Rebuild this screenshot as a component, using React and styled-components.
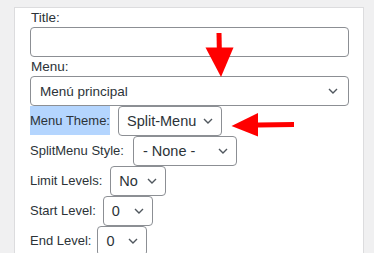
import React from "react";
import styled, { createGlobalStyle } from "styled-components";

const GlobalStyle = createGlobalStyle`
  html, body { margin: 0; padding: 0; background: #f0f0f1; }
  body { font-family: "Liberation Sans", Arial, sans-serif; color: #2c3338; }
`;

const Page = styled.div`
  position: relative;
  width: 374px;
  height: 253px;
  overflow: hidden;
  box-sizing: border-box;
  padding: 7px 10px 0 14px;
`;

const Panel = styled.div`
  background: #fff;
  border: 1px solid #dcdcde;
  border-bottom: none;
  height: 260px;
  box-sizing: border-box;
  padding: 1px 14px 0 15px;
`;

const BlockLabel = styled.div`
  font-size: 13.5px;
  line-height: 18px;
  height: 18px;
  padding-left: 1px;
  color: #2c3338;
`;

const TextInput = styled.div`
  box-sizing: border-box;
  height: 30px;
  border: 1px solid #8c8f94;
  border-radius: 4px;
  background: #fff;
  margin-bottom: 1px;
`;

const SelectBox = styled.div`
  box-sizing: border-box;
  display: flex;
  align-items: center;
  justify-content: space-between;
  width: ${(p) => (p.$w ? `${p.$w}px` : "100%")};
  height: 30px;
  padding: 0 ${(p) => p.$pr || 8}px 0 ${(p) => p.$pl || 8}px;
  border: 1px solid #8c8f94;
  border-radius: 4px;
  background: #fff;
  font-size: ${(p) => p.$fs || 14.5}px;
  color: #2c3338;
  flex-shrink: 0;
`;

const Row = styled.div`
  display: flex;
  align-items: center;
  gap: ${(p) => p.$gap || 7}px;
  height: 30px;
`;

const InlineLabel = styled.span`
  font-size: 13px;
  line-height: 29px;
  height: 29px;
  margin-top: -1px;
  background: ${(p) => (p.$selected ? "#b4d5fe" : "transparent")};
  color: #2c3338;
  white-space: nowrap;
`;

const Overlay = styled.svg`
  position: absolute;
  left: 0;
  top: 0;
  pointer-events: none;
`;

const Chevron = () => (
  <svg width="10" height="6" viewBox="0 0 10 6">
    <path d="M1 1 L5 5 L9 1" fill="none" stroke="#50575e" strokeWidth="1.4" />
  </svg>
);

const rows = [
  { label: "Menu Theme:", value: "Split-Menu", w: 104, selected: true, gap: 8 },
  { label: "SplitMenu Style:", value: "- None -", w: 104, gap: 9, pl: 9 },
  { label: "Limit Levels:", value: "No", w: 56, gap: 8 },
  { label: "Start Level:", value: "0", w: 50, gap: 7 },
  { label: "End Level:", value: "0", w: 50, gap: 6 },
];

export default function App() {
  return (
    <>
      <GlobalStyle />
      <Page>
        <Panel>
          <BlockLabel>Title:</BlockLabel>
          <TextInput />
          <BlockLabel>Menu:</BlockLabel>
          <SelectBox $pl={9} $pr={10} $fs={13.5}>
            <span>Menú principal</span>
            <Chevron />
          </SelectBox>
          {rows.map((r) => (
            <Row key={r.label} $gap={r.gap}>
              <InlineLabel $selected={r.selected}>{r.label}</InlineLabel>
              <SelectBox $w={r.w} $pl={r.pl}>
                <span>{r.value}</span>
                <Chevron />
              </SelectBox>
            </Row>
          ))}
        </Panel>
        <Overlay width="374" height="253" viewBox="0 0 374 253">
          <polygon points="216.5,33 221.5,33 221.8,48 216.8,48" fill="#f00" />
          <polygon points="205.5,47.5 233.5,47.5 221,77" fill="#f00" />
          <polygon points="258,122.5 294,122 294,127 258,127.5" fill="#f00" />
          <polygon points="231.5,126 258,113 258,136.5" fill="#f00" />
        </Overlay>
      </Page>
    </>
  );
}
